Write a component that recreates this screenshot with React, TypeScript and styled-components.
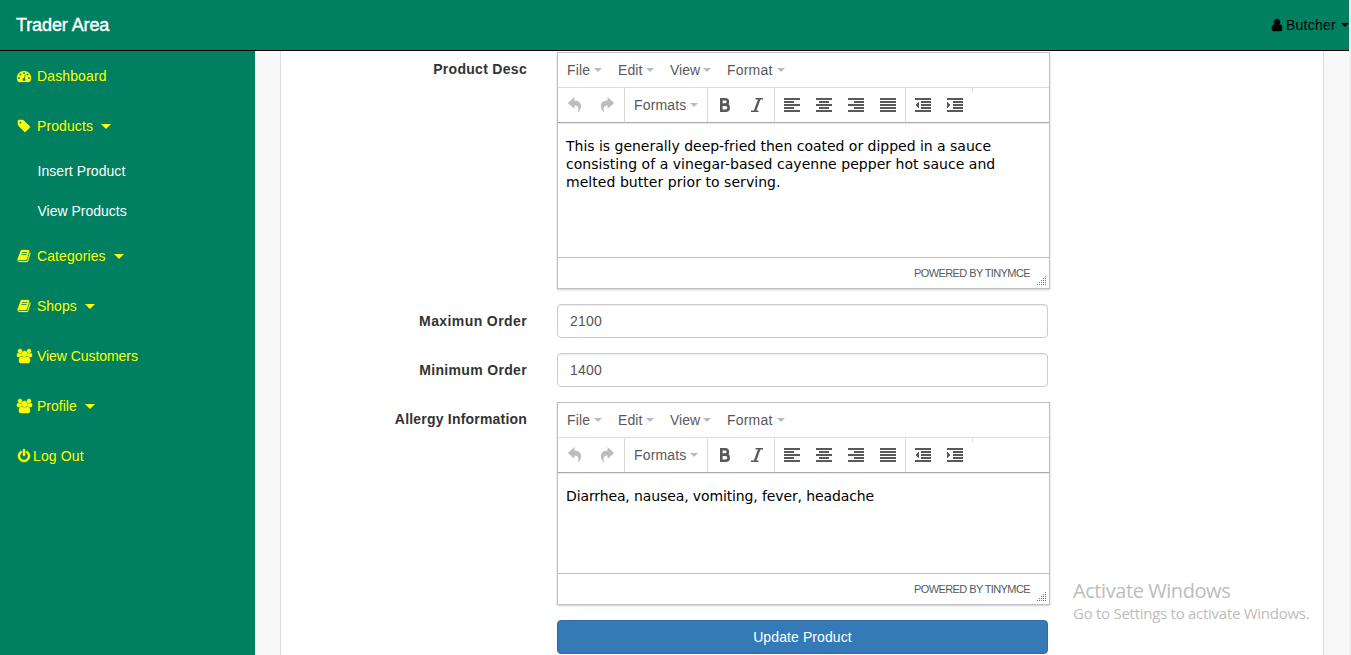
import React from 'react';
import styled, { createGlobalStyle } from 'styled-components';

const Global = createGlobalStyle`
  * { box-sizing: border-box; }
  html, body { margin: 0; padding: 0; overflow: hidden; }
  body { font-family: "Liberation Sans", Arial, sans-serif; font-size: 14px; line-height: 20px; color: #333; background: #f8f8f8; }
`;

const Page = styled.div`
  width: 1351px; height: 655px; overflow: hidden;
  display: grid; grid-template: 51px 604px / 1349px 2px;
`;
const Navbar = styled.header`
  display: flex; align-items: center; justify-content: space-between;
  background: #008060; border-bottom: 1px solid #000; padding: 0 0 0 16px;
`;
const Gutter = styled.div`background: #f0f0f0; grid-row: 1 / 3; grid-column: 2;`;
const Brand = styled.div`
  font-size: 18px; color: #fff; -webkit-text-stroke: 0.4px #fff; white-space: nowrap; letter-spacing: -0.1px;
`;
const UserMenu = styled.div`display: flex; align-items: center; color: #000; white-space: nowrap;`;
const Txt = styled.span<{ $ls?: number }>`letter-spacing: ${p => p.$ls ?? 0}px; white-space: nowrap;`;
const Columns = styled.div`display: flex; min-height: 0;`;
const Sidebar = styled.nav`width: 255px; flex: none; background: #008060; color: #ff0;`;
const NavItem = styled.div`height: 50px; display: flex; align-items: center; padding-left: 17px;`;
const SubItem = styled.div`height: 40px; display: flex; align-items: center; padding-left: 37.5px; color: #fff;`;
const SubList = styled.div``;
const IconSlot = styled.span<{ $w: number }>`width: ${p => p.$w}px; display: flex; flex: none;`;
const Caret = styled.i<{ $gap: number; $tall?: boolean; $color?: string }>`
  width: 0; height: 0; margin-left: ${p => p.$gap}px; flex: none;
  border: ${p => (p.$tall ? 5 : 4)}px solid transparent; border-bottom: 0;
  border-top-color: ${p => p.$color ?? 'currentColor'};
`;
const Main = styled.main`flex: 1; padding: 0 25px; display: flex; overflow: hidden;`;
const Panel = styled.section`
  flex: 1; background: #fff; border: solid #ddd; border-width: 0 1px; overflow: hidden; position: relative;
`;
const Form = styled.form`display: flex; flex-direction: column; gap: 15px; padding: 1px 0 0;`;
const Field = styled.div`display: flex; gap: 30px;`;
const Label = styled.label<{ $ls: number }>`
  width: 246px; flex: none; text-align: right; font-weight: 700; line-height: 20px; padding-top: 7px;
  letter-spacing: ${p => p.$ls}px; white-space: nowrap;
`;
const Input = styled.input`
  width: 491px; height: 34px; border: 1px solid #ccc; border-radius: 4px; padding: 6px 12px; outline: none;
  font: 14px "Liberation Sans", Arial, sans-serif; color: #555; letter-spacing: 0.25px;
  box-shadow: inset 0 1px 1px rgba(0,0,0,.075);
`;
const Submit = styled.button`
  width: 491px; height: 34px; margin-left: 276px; border: 1px solid #2e6da4; border-radius: 4px;
  background: #337ab7; color: #fff; font: 14px "Liberation Sans", Arial, sans-serif; letter-spacing: 0.1px; padding: 0;
`;
const EditorBox = styled.div`
  width: 493px; border: 1px solid #bfbfc3; box-shadow: 0 1px 2px rgba(0,0,0,.2); color: #595959; background: #fff;
`;
const MenuBar = styled.div`height: 35px; display: flex; align-items: center; border-bottom: 1px solid #ddd; padding-left: 9px;`;
const MenuItem = styled.div<{ $w: number }>`width: ${p => p.$w}px; display: flex; align-items: center;`;
const Toolbar = styled.div`height: 35px; display: flex; border-bottom: 1px solid #aaa; box-shadow: 0 1px 1px rgba(0,0,0,.08);`;
const Group = styled.div<{ $w: number; $last?: boolean }>`
  width: ${p => p.$w}px; display: flex; align-items: center; padding-left: 1px;
  border-right: 1px solid ${p => (p.$last ? 'transparent' : '#d9d9d9')};
`;
const Stub = styled.div`width: 1px; height: 4px; background: #d9d9d9;`;
const Tool = styled.span`width: 32px; display: flex; justify-content: center;`;
const FormatsButton = styled.div`display: flex; align-items: center; padding-left: 8px;`;
const EditArea = styled.div<{ $h: number }>`
  height: ${p => p.$h}px; padding: 14px 8px; color: #000; font: 14px/18px "DejaVu Sans", Verdana, sans-serif; white-space: nowrap;
`;
const Line = styled.div<{ $ls: number }>`letter-spacing: ${p => p.$ls}px;`;
const StatusBar = styled.div`
  height: 31px; border-top: 1px solid #bfbfc3; display: flex; justify-content: flex-end; align-items: center;
  font-size: 11px; padding-right: 2px; letter-spacing: -0.6px;
`;
const Grip = styled.svg`align-self: flex-end; margin: 0 0 2px 7px;`;
const Watermark = styled.aside`
  position: absolute; left: 792px; top: 527px; color: #bdbdbd; font-family: "Open Sans", "Noto Sans", sans-serif; white-space: nowrap;
`;
const WmTitle = styled.div`font-size: 20px; line-height: 26px; letter-spacing: -0.43px;`;
const WmText = styled.div`font-size: 15px; line-height: 19px; letter-spacing: -0.27px;`;

const paths = {
  dashboard: 'M384 1152q0-53-37.5-90.5t-90.5-37.5-90.5 37.5-37.5 90.5 37.5 90.5 90.5 37.5 90.5-37.5 37.5-90.5zm192-448q0-53-37.5-90.5t-90.5-37.5-90.5 37.5-37.5 90.5 37.5 90.5 90.5 37.5 90.5-37.5 37.5-90.5zm428 481l101-382q6-26-7.5-48.5t-38.5-29.5-48 6.5-30 39.5l-101 382q-60 5-107 43.5t-63 98.5q-20 77 20 146t117 89 146-20 89-117q16-60-6-117t-72-91zm660-33q0-53-37.5-90.5t-90.5-37.5-90.5 37.5-37.5 90.5 37.5 90.5 90.5 37.5 90.5-37.5 37.5-90.5zm-640-640q0-53-37.5-90.5t-90.5-37.5-90.5 37.5-37.5 90.5 37.5 90.5 90.5 37.5 90.5-37.5 37.5-90.5zm448 192q0-53-37.5-90.5t-90.5-37.5-90.5 37.5-37.5 90.5 37.5 90.5 90.5 37.5 90.5-37.5 37.5-90.5zm320 448q0 261-141 483-19 29-54 29h-1402q-35 0-54-29-141-221-141-483 0-182 71-348t191-286 286-191 348-71 348 71 286 191 191 286 71 348z',
  tag: 'M576 448q0-53-37.5-90.5t-90.5-37.5-90.5 37.5-37.5 90.5 37.5 90.5 90.5 37.5 90.5-37.5 37.5-90.5zm1067 576q0 53-37 90l-491 492q-39 37-91 37-53 0-90-37l-715-716q-38-37-64.5-101t-26.5-117v-416q0-52 38-90t90-38h416q53 0 117 26.5t102 64.5l715 714q37 39 37 91z',
  book: 'M1703 478q40 57 18 129l-275 906q-19 64-76.5 107.5t-122.5 43.5h-923q-77 0-148.5-53.5t-99.5-131.5q-24-67-2-127 0-4 3-27t4-37q1-8-3-21.5t-3-19.5q2-11 8-21t16.5-23.5 16.5-23.5q23-38 45-91.5t30-91.5q3-10 .5-30t-.5-28q3-11 17-28t17-23q21-36 42-92t25-90q1-9-2.5-32t.5-28q4-13 22-30.5t22-22.5q19-26 42.5-84.5t27.5-96.5q1-8-3-25.5t-2-26.5q2-8 9-18t18-23 17-21q8-12 16.5-30.5t15-35 16-36 19.5-32 26.5-23.5 36-11.5 47.5 5.5l-1 3q38-9 51-9h761q74 0 114 56t18 130l-274 906q-36 119-71.5 153.5t-128.5 34.5h-869q-27 0-38 15-11 16-1 43 24 70 144 70h923q29 0 56-15.5t35-41.5l300-987q7-22 5-57 38 15 59 43zm-1064 2q-4 13 2 22.5t20 9.5h608q13 0 25.5-9.5t16.5-22.5l21-64q4-13-2-22.5t-20-9.5h-608q-13 0-25.5 9.5t-16.5 22.5zm-83 256q-4 13 2 22.5t20 9.5h608q13 0 25.5-9.5t16.5-22.5l21-64q4-13-2-22.5t-20-9.5h-608q-13 0-25.5 9.5t-16.5 22.5z',
  users: 'M593 896q-162 5-265 128h-134q-82 0-138-40.5t-56-118.5q0-353 124-353 6 0 43.5 21t97.5 42.5 119 21.5q67 0 133-23-5 37-5 66 0 139 81 256zm1071 637q0 120-73 189.5t-194 69.5h-874q-121 0-194-69.5t-73-189.5q0-53 3.5-103.5t14-109 26.5-108.5 43-97.5 62-81 85.5-53.5 111.5-20q10 0 43 21.5t73 48 107 48 135 21.5 135-21.5 107-48 73-48 43-21.5q61 0 111.5 20t85.5 53.5 62 81 43 97.5 26.5 108.5 14 109 3.5 103.5zm-1024-1277q0 106-75 181t-181 75-181-75-75-181 75-181 181-75 181 75 75 181zm704 384q0 159-112.5 271.5t-271.5 112.5-271.5-112.5-112.5-271.5 112.5-271.5 271.5-112.5 271.5 112.5 112.5 271.5zm576 225q0 78-56 118.5t-138 40.5h-134q-103-123-265-128 81-117 81-256 0-29-5-66 66 23 133 23 59 0 119-21.5t97.5-42.5 43.5-21q124 0 124 353zm-128-609q0 106-75 181t-181 75-181-75-75-181 75-181 181-75 181 75 75 181z',
  power: 'M1664 896q0 156-61 298t-164 245-245 164-298 61-298-61-245-164-164-245-61-298q0-182 80.5-343t226.5-270q43-32 95.5-25t83.5 50q32 42 24.5 94.5t-49.5 84.5q-98 74-151.5 181t-53.5 228q0 104 40.5 198.5t109.5 163.5 163.5 109.5 198.5 40.5 198.5-40.5 163.5-109.5 109.5-163.5 40.5-198.5q0-121-53.5-228t-151.5-181q-42-32-49.5-84.5t24.5-94.5q31-43 84-50t95 25q146 109 226.5 270t80.5 343zm-640-768v640q0 52-38 90t-90 38-90-38-38-90v-640q0-52 38-90t90-38 90 38 38 90z',
  user: 'M1536 1399q0 109-62.5 187t-150.5 78h-854q-88 0-150.5-78t-62.5-187q0-85 8.5-160.5t31.5-152 58.5-131 94-89 134.5-34.5q131 128 313 128t313-128q76 0 134.5 34.5t94 89 58.5 131 31.5 152 8.5 160.5zm-256-887q0 159-112.5 271.5t-271.5 112.5-271.5-112.5-112.5-271.5 112.5-271.5 271.5-112.5 271.5 112.5 112.5 271.5z',
};
type IconName = keyof typeof paths;

function Icon({ name }: { name: IconName }) {
  const w = name === 'users' ? 1920 : 1792;
  return (
    <svg width={w / 128} height={14} viewBox={`0 0 ${w} 1792`} fill="currentColor" stroke="currentColor" strokeWidth={name === 'book' || name === 'dashboard' ? 30 : 60} overflow="visible">
      <path d={paths[name]} />
    </svg>
  );
}

type Bar = [number, number];
function Bars({ rows, children }: { rows: Bar[]; children?: React.ReactNode }) {
  return (
    <svg width="16" height="14" viewBox="0 0 16 14" fill="#595959" shapeRendering="crispEdges">
      {rows.map(([x, w], i) => <rect key={i} x={x} y={i * 3} width={w} height="2" />)}
      {children}
    </svg>
  );
}

function Redo({ flip }: { flip?: boolean }) {
  return (
    <svg width="16" height="16" viewBox="0 0 16 16" fill="#bdbdbd">
      <path transform={flip ? 'matrix(-1 0 0 1 16 0)' : undefined} d="M8.6 0 15.2 5.9 8.6 11.8V8.4C4.6 8.2 3.4 11.4 5.6 15.8 .6 12.6-.2 3.8 8.6 3.6Z" />
    </svg>
  );
}

const menus: [string, number, number, number][] = [['File', 51, 0.2, 4], ['Edit', 52, 0.1, 3], ['View', 57, 0, 3], ['Format', 60, 0.2, 4]];

function Editor({ height, lines }: { height: number; lines: [string, number][] }) {
  return (
    <EditorBox>
      <MenuBar>
        {menus.map(([name, w, ls, gap]) => (
          <MenuItem key={name} $w={w}><Txt $ls={ls}>{name}</Txt><Caret $gap={gap} $color="#b5bcc4" /></MenuItem>
        ))}
      </MenuBar>
      <Toolbar>
        <Group $w={67}><Tool><Redo flip /></Tool><Tool><Redo /></Tool></Group>
        <Group $w={83}><FormatsButton><Txt $ls={0.15}>Formats</Txt><Caret $gap={4} $color="#b5bcc4" /></FormatsButton></Group>
        <Group $w={67}>
          <Tool>
            <svg width="16" height="14" viewBox="0.5 0 16 14" fill="none" stroke="#595959" strokeWidth="2.6">
              <path d="M4.3 1.3H8.5C12.4 1.3 12.4 6.6 8.5 6.6H4.3M4.3 6.6H9C13.2 6.6 13.2 12.7 9 12.7H4.3M4.8 0V14" />
            </svg>
          </Tool>
          <Tool>
            <svg width="16" height="14" viewBox="0 0 16 14" fill="none" stroke="#595959">
              <path strokeWidth="1.4" d="M6.5.7H14M2 13.3H9.5" /><path strokeWidth="2.4" d="M10.5.7 5.8 13.3" />
            </svg>
          </Tool>
        </Group>
        <Group $w={131}>
          <Tool><Bars rows={[[0, 16], [0, 10], [0, 16], [0, 10], [0, 16]]} /></Tool>
          <Tool><Bars rows={[[0, 16], [3, 10], [0, 16], [3, 10], [0, 16]]} /></Tool>
          <Tool><Bars rows={[[0, 16], [6, 10], [0, 16], [6, 10], [0, 16]]} /></Tool>
          <Tool><Bars rows={[[0, 16], [0, 16], [0, 16], [0, 16], [0, 16]]} /></Tool>
        </Group>
        <Group $w={66} $last>
          <Tool><Bars rows={[[0, 16], [6, 10], [6, 10], [6, 10], [0, 16]]}><path d="M4 4v6L0 7z" /></Bars></Tool>
          <Tool><Bars rows={[[0, 16], [6, 10], [6, 10], [6, 10], [0, 16]]}><path d="M0 4v6l4-3z" /></Bars></Tool>
        </Group>
        <Stub />
      </Toolbar>
      <EditArea $h={height}>{lines.map(([t, ls]) => <Line key={t} $ls={ls}>{t}</Line>)}</EditArea>
      <StatusBar>
        POWERED BY TINYMCE
        <Grip width="10" height="10" fill="#777" shapeRendering="crispEdges">
          {[0, 1, 2, 3, 4].map(r => Array.from({ length: r + 1 }, (_, i) => <rect key={`${r}-${i}`} x={8 - i * 2} y={r * 2} width="1" height="1" />))}
        </Grip>
      </StatusBar>
    </EditorBox>
  );
}

function Entry({ icon, text, caret, ls = 0, slot = 20 }: { icon: IconName; text: string; caret?: number; ls?: number; slot?: number }) {
  return (
    <NavItem>
      <IconSlot $w={slot}><Icon name={icon} /></IconSlot>
      <Txt $ls={ls}>{text}</Txt>
      {caret !== undefined && <Caret $gap={caret} $tall />}
    </NavItem>
  );
}

export default function App() {
  return (
    <Page>
      <Global />
      <Navbar>
        <Brand>Trader Area</Brand>
        <UserMenu><IconSlot $w={16}><Icon name="user" /></IconSlot><Txt $ls={0.25}>Butcher</Txt><Caret $gap={5} /></UserMenu>
      </Navbar>
      <Gutter />
      <Columns>
        <Sidebar>
          <Entry icon="dashboard" text="Dashboard" ls={0.12} />
          <Entry icon="tag" text="Products" ls={0.1} caret={8} />
          <SubList>
            <SubItem><Txt $ls={0.05}>Insert Product</Txt></SubItem>
            <SubItem><Txt>View Products</Txt></SubItem>
          </SubList>
          <Entry icon="book" text="Categories" ls={0.1} caret={8} />
          <Entry icon="book" text="Shops" caret={8} />
          <Entry icon="users" text="View Customers" ls={-0.06} />
          <Entry icon="users" text="Profile" caret={8} />
          <Entry icon="power" text="Log Out" ls={0.12} slot={16} />
        </Sidebar>
        <Main>
          <Panel>
            <Form>
              <Field>
                <Label $ls={0.3}>Product Desc</Label>
                <Editor height={134} lines={[
                  ['This is generally deep-fried then coated or dipped in a sauce', -0.02],
                  ['consisting of a vinegar-based cayenne pepper hot sauce and', 0.035],
                  ['melted butter prior to serving.', 0.05],
                ]} />
              </Field>
              <Field><Label $ls={0.4}>Maximun Order</Label><Input defaultValue="2100" /></Field>
              <Field><Label $ls={0.33}>Minimum Order</Label><Input defaultValue="1400" /></Field>
              <Field>
                <Label $ls={0.2}>Allergy Information</Label>
                <Editor height={100} lines={[['Diarrhea, nausea, vomiting, fever, headache', -0.12]]} />
              </Field>
              <Submit type="button">Update Product</Submit>
            </Form>
            <Watermark><WmTitle>Activate Windows</WmTitle><WmText>Go to Settings to activate Windows.</WmText></Watermark>
          </Panel>
        </Main>
      </Columns>
    </Page>
  );
}
